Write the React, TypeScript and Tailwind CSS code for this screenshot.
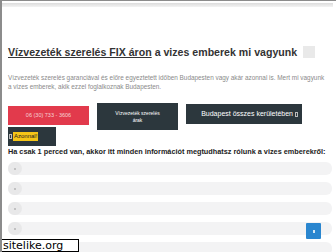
import React from "react";

const rows = [0, 1, 2, 3, 4];

export default function App() {
  return (
    <div
      className="relative h-[252px] w-[336px] overflow-hidden border-l-2 border-t border-[#8c8c8c] bg-white"
      style={{ fontFamily: '"Liberation Sans", Arial, sans-serif' }}
    >
      {/* top shadow band */}
      <div className="mr-[3px] mt-[2px] h-[4px] bg-gradient-to-b from-[#dcdcdc] to-[#f3f3f3]" />

      <div className="pl-[6px] pr-[4px]">
        {/* heading */}
        <div className="mt-[38px] flex items-center gap-[6px]">
          <h1 className="whitespace-nowrap text-[10.6px] font-bold leading-[14px] text-[#333]">
            <span className="underline decoration-1 underline-offset-1">Vízvezeték szerelés FIX áron</span> a vizes emberek mi vagyunk
          </h1>
          <div className="h-[12px] w-[12px] bg-[#e9e9e9]" />
        </div>

        {/* intro */}
        <p className="mt-[14px] whitespace-nowrap text-[6.4px] leading-[9px] text-[#8a8a8a]">
          Vízvezeték szerelés garanciával és előre egyeztetett időben Budapesten vagy akár azonnal is. Mert mi vagyunk
          <br />
          a vizes emberek, akik ezzel foglalkoznak Budapesten.
        </p>

        {/* buttons */}
        <div className="mt-[12px] flex items-start gap-[8px]">
          <div className="mt-[3px] flex h-[19px] w-[81px] items-center justify-center bg-[#e23a4c] text-[5.5px] text-[#f6d0d5]">
            06 (30) 733 - 3606
          </div>
          <div className="flex h-[27px] w-[81px] flex-col items-center justify-center bg-[#2c373d] text-center text-[5px] leading-[7px] text-white">
            <span>Vízvezeték szerelés</span>
            <span>árak</span>
          </div>
          <div className="mt-[1px] flex h-[20px] w-[116px] items-center justify-end gap-[2px] bg-[#2c373d] pr-[4px] text-[7px] text-white">
            <span>Budapest összes kerületében</span>
            <span className="h-[5px] w-[3px] border border-[#bbb]" />
          </div>
        </div>

        <div className="mt-[-3px] flex h-[19px] w-[48px] items-center gap-[1px] bg-[#2c373d] pl-[1px]">
          <span className="h-[5px] w-[3px] border border-[#bbb]" />
          <span className="bg-[#f5c517] px-[1px] text-[6px] leading-[9px] text-[#222]">Azonnal!</span>
        </div>

        <p className="mt-[1px] whitespace-nowrap text-[7.3px] font-bold leading-[9px] text-[#222]">
          Ha csak 1 perced van, akkor itt minden információt megtudhatsz rólunk a vizes emberekről:
        </p>

        {/* accordion */}
        <div className="mt-[6px] flex flex-col gap-[7px]">
          {rows.map((r) => (
            <div key={r} className="flex h-[13px] items-center rounded-[6px] bg-[#f3f3f4]">
              <div className="flex h-[13px] w-[14px] items-center justify-center rounded-full bg-[#e8e8e9]">
                <span className="h-[2px] w-[2px] rounded-full bg-[#b5b5b5]" />
              </div>
            </div>
          ))}
        </div>
      </div>

      {/* floating blue button */}
      <div className="absolute left-[304px] top-[222px] flex h-[16px] w-[15px] items-center justify-center rounded-[1px] bg-[#2a86cf]">
        <span className="h-[3px] w-[2px] bg-white/80" />
      </div>

      {/* watermark badge */}
      <div
        className="absolute bottom-0 left-[-2px] flex h-[13px] w-[79px] items-center border border-black bg-white pl-[2px] text-[11px] leading-[11px] text-black"
        style={{ fontFamily: '"DejaVu Sans", sans-serif' }}
      >
        sitelike.org
      </div>
    </div>
  );
}
